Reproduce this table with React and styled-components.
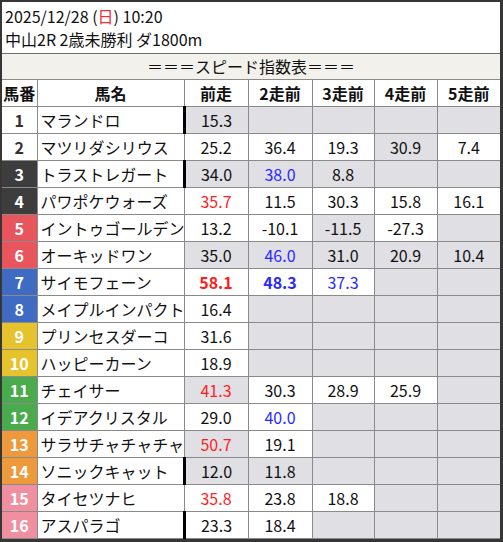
import React from 'react';
import styled, { createGlobalStyle } from 'styled-components';

const GlobalStyle = createGlobalStyle`
  html, body {
    margin: 0;
    padding: 0;
    background: #fff;
  }
  body {
    font-family: "Noto Sans CJK JP", "Noto Sans", sans-serif;
    color: #111;
  }
`;

const Frame = styled.div`
  width: 503px;
  height: 542px;
  box-sizing: border-box;
  border-style: solid;
  border-color: #363636;
  border-width: 2px 3px 3px 2px;
  background: #fff;
  overflow: hidden;
`;

const Info = styled.div`
  height: 51px;
  box-sizing: border-box;
  padding: 3px 3px;
  font-size: 16px;
  line-height: 23px;
  white-space: nowrap;
`;

const Sun = styled.span`
  color: #e8323c;
`;

const Table = styled.table`
  width: 498px;
  table-layout: fixed;
  border-collapse: collapse;
  font-size: 16px;
  border-top: 1px solid #6e6e6e;
`;

const TitleCell = styled.td`
  height: 25px;
  padding: 0;
  background: #f2f1ec;
  text-align: center;
  border-bottom: 1px solid #8a8a8a;
  line-height: 25px;
`;

const HeadCell = styled.th`
  height: 26px;
  padding: 0;
  font-weight: 700;
  text-align: center;
  border: 1px solid #8a8a8a;
  border-top: none;
  &:first-child { border-left: none; }
  &:last-child { border-right: none; }
`;

const laneColors = {
  1: ['#fff', '#333'],
  2: ['#fff', '#333'],
  3: ['#3d3d3d', '#fff'],
  4: ['#3d3d3d', '#fff'],
  5: ['#e9555c', '#fff'],
  6: ['#e9555c', '#fff'],
  7: ['#3f6bc2', '#fff'],
  8: ['#3f6bc2', '#fff'],
  9: ['#e6c22d', '#fff'],
  10: ['#e6c22d', '#fff'],
  11: ['#4aab4c', '#fff'],
  12: ['#4aab4c', '#fff'],
  13: ['#ef993d', '#fff'],
  14: ['#ef993d', '#fff'],
  15: ['#ef8f9f', '#fff'],
  16: ['#ef8f9f', '#fff'],
};

const NumCell = styled.td`
  height: 26px;
  padding: 0;
  text-align: center;
  font-weight: 700;
  background: ${p => p.$bg};
  color: ${p => p.$fg};
  border: 1px solid #8a8a8a;
  border-left: none;
`;

const NameCell = styled.td`
  padding: 0 0 0 3px;
  white-space: nowrap;
  overflow: hidden;
  border: 1px solid #8a8a8a;
`;

const textColors = { r: '#ff1e1e', b: '#2a2aff' };

const ValCell = styled.td`
  padding: 0;
  text-align: center;
  background: ${p => (p.$g ? '#dfdfe4' : '#fff')};
  color: ${p => textColors[p.$c] || '#111'};
  font-weight: ${p => (p.$bold ? 700 : 400)};
  border: 1px solid #8a8a8a;
  border-left: ${p => (p.$thick ? '3px solid #000' : '1px solid #8a8a8a')};
  &:last-child { border-right: none; }
`;

const G = { v: '', g: true };

const horses = [
  [1, 'マランドロ', [{ v: '15.3', g: true, thick: true }, G, G, G, G]],
  [2, 'マツリダシリウス', [{ v: '25.2' }, { v: '36.4' }, { v: '19.3' }, { v: '30.9', g: true }, { v: '7.4' }]],
  [3, 'トラストレガート', [{ v: '34.0', g: true, thick: true }, { v: '38.0', g: true, c: 'b' }, { v: '8.8', g: true }, G, G]],
  [4, 'パワポケウォーズ', [{ v: '35.7', c: 'r' }, { v: '11.5' }, { v: '30.3' }, { v: '15.8' }, { v: '16.1' }]],
  [5, 'イントゥゴールデン', [{ v: '13.2' }, { v: '-10.1' }, { v: '-11.5', g: true }, { v: '-27.3' }, G]],
  [6, 'オーキッドワン', [{ v: '35.0', g: true }, { v: '46.0', g: true, c: 'b' }, { v: '31.0', g: true }, { v: '20.9', g: true }, { v: '10.4', g: true }]],
  [7, 'サイモフェーン', [{ v: '58.1', c: 'r', bold: true }, { v: '48.3', c: 'b', bold: true }, { v: '37.3', c: 'b' }, G, G]],
  [8, 'メイプルインパクト', [{ v: '16.4' }, G, G, G, G]],
  [9, 'プリンセスダーコ', [{ v: '31.6' }, G, G, G, G]],
  [10, 'ハッピーカーン', [{ v: '18.9' }, G, G, G, G]],
  [11, 'チェイサー', [{ v: '41.3', g: true, c: 'r' }, { v: '30.3' }, { v: '28.9' }, { v: '25.9' }, G]],
  [12, 'イデアクリスタル', [{ v: '29.0' }, { v: '40.0', c: 'b' }, G, G, G]],
  [13, 'サラサチャチャチャ', [{ v: '50.7', g: true, c: 'r' }, { v: '19.1' }, G, G, G]],
  [14, 'ソニックキャット', [{ v: '12.0', g: true, thick: true }, { v: '11.8', g: true }, G, G, G]],
  [15, 'タイセツナヒ', [{ v: '35.8', c: 'r' }, { v: '23.8' }, { v: '18.8' }, G, G]],
  [16, 'アスパラゴ', [{ v: '23.3', thick: true }, { v: '18.4' }, G, G, G]],
];

const heads = ['馬番', '馬名', '前走', '2走前', '3走前', '4走前', '5走前'];
const widths = [35, 147, 64, 64, 62, 63, 63];

export default function App() {
  return (
    <>
      <GlobalStyle />
      <Frame>
        <Info>
          <div>2025/12/28 (<Sun>日</Sun>) 10:20</div>
          <div>中山2R 2歳未勝利 ダ1800m</div>
        </Info>
        <Table>
          <colgroup>
            {widths.map((w, i) => <col key={i} style={{ width: w }} />)}
          </colgroup>
          <tbody>
            <tr>
              <TitleCell colSpan={7}>＝＝＝スピード指数表＝＝＝</TitleCell>
            </tr>
            <tr>
              {heads.map(h => <HeadCell key={h}>{h}</HeadCell>)}
            </tr>
            {horses.map(([no, name, vals]) => (
              <tr key={no}>
                <NumCell $bg={laneColors[no][0]} $fg={laneColors[no][1]}>{no}</NumCell>
                <NameCell>{name}</NameCell>
                {vals.map((c, i) => (
                  <ValCell key={i} $g={c.g} $c={c.c} $bold={c.bold} $thick={c.thick}>{c.v}</ValCell>
                ))}
              </tr>
            ))}
          </tbody>
        </Table>
      </Frame>
    </>
  );
}
